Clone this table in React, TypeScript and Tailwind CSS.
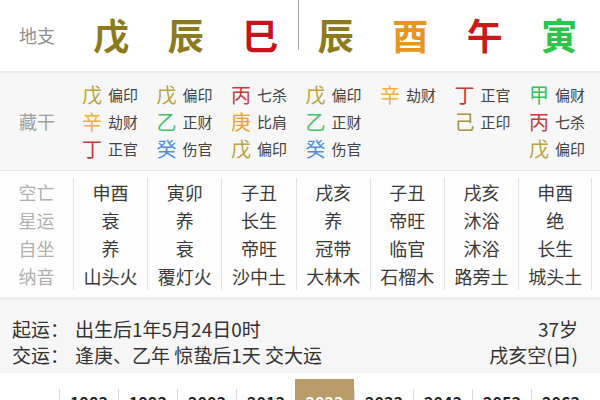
const branches = [
  { ch: '戊', color: 'text-[#8c7a1f]' },
  { ch: '辰', color: 'text-[#8c7a1f]' },
  { ch: '巳', color: 'text-[#c4141c]' },
  { ch: '辰', color: 'text-[#8c7a1f]' },
  { ch: '酉', color: 'text-[#e9951d]' },
  { ch: '午', color: 'text-[#cc1a1a]' },
  { ch: '寅', color: 'text-[#2ec34b]' },
];

const stemColor: Record<string, string> = {
  戊: 'text-[#b9a33c]',
  己: 'text-[#a8953a]',
  辛: 'text-[#f0b23a]',
  庚: 'text-[#e9a131]',
  丁: 'text-[#c53a3a]',
  丙: 'text-[#c43d3d]',
  乙: 'text-[#43c266]',
  甲: 'text-[#35c260]',
  癸: 'text-[#4b8fdc]',
};

type Hidden = [string, string] | null;

const hidden: Hidden[][] = [
  [['戊', '偏印'], ['辛', '劫财'], ['丁', '正官']],
  [['戊', '偏印'], ['乙', '正财'], ['癸', '伤官']],
  [['丙', '七杀'], ['庚', '比肩'], ['戊', '偏印']],
  [['戊', '偏印'], ['乙', '正财'], ['癸', '伤官']],
  [['辛', '劫财'], null, null],
  [['丁', '正官'], ['己', '正印'], null],
  [['甲', '偏财'], ['丙', '七杀'], ['戊', '偏印']],
];

const details = [
  ['申酉', '衰', '养', '山头火'],
  ['寅卯', '养', '衰', '覆灯火'],
  ['子丑', '长生', '帝旺', '沙中土'],
  ['戌亥', '养', '冠带', '大林木'],
  ['子丑', '帝旺', '临官', '石榴木'],
  ['戌亥', '沐浴', '沐浴', '路旁土'],
  ['申酉', '绝', '长生', '城头土'],
];

const detailLabels = ['空亡', '星运', '自坐', '纳音'];

const years = ['1983', '1993', '2003', '2013', '2023', '2033', '2043', '2053', '2063'];

export default function App() {
  return (
    <div
      className="w-[600px] h-[400px] overflow-hidden bg-white"
      style={{ fontFamily: '"Noto Sans CJK SC", "Noto Sans", sans-serif' }}
    >
      {/* 地支 */}
      <div className="flex h-[73px] border-b-2 border-[#ebebeb]">
        <div className="w-[74px] flex items-center justify-center text-[18px] text-[#8f8f8f]">地支</div>
        {branches.map((b, i) => (
          <div key={i} className="flex">
            {i === 3 && <div className="h-[50px] self-start border-l border-[#a8a8a8]" />}
            <div
              className={`w-[74.5px] pb-[3px] flex items-center justify-center text-[36px] font-bold leading-none ${b.color}`}
            >
              {b.ch}
            </div>
          </div>
        ))}
      </div>

      {/* 藏干 */}
      <div className="flex bg-[#f7f7f7] py-[8px] border-b border-[#e6e6e6]">
        <div className="w-[74px] flex items-center justify-center text-[18px] text-[#a0a0a0]">藏干</div>
        {hidden.map((col, i) => (
          <div key={i} className="w-[74.5px] pl-[8px] flex flex-col">
            {col.map((item, j) => (
              <div key={j} className="h-[27px] flex items-center">
                {item && (
                  <>
                    <span className={`w-[20px] text-[20px] leading-none ${stemColor[item[0]]}`}>{item[0]}</span>
                    <span className="ml-[6px] text-[15px] leading-none text-[#444]">{item[1]}</span>
                  </>
                )}
              </div>
            ))}
          </div>
        ))}
      </div>

      {/* 空亡 / 星运 / 自坐 / 纳音 */}
      <div className="flex bg-[#fdfdfd] pt-[7px] pb-[7px]">
        <div className="w-[73px] flex flex-col">
          {detailLabels.map((l) => (
            <div key={l} className="h-[28px] flex items-center justify-center text-[18px] text-[#b0b0b0]">
              {l}
            </div>
          ))}
        </div>
        {details.map((col, i) => (
          <div
            key={i}
            className={`w-[74.2px] flex flex-col border-l border-[#e3e3e3] ${i === 6 ? 'border-r' : ''}`}
          >
            {col.map((v, j) => (
              <div key={j} className="h-[28px] flex items-center justify-center text-[18px] text-[#3a3a3a]">
                {v}
              </div>
            ))}
          </div>
        ))}
      </div>

      {/* 起运 / 交运 */}
      <div className="border-t-[3px] border-[#ececec] bg-[#f6f6f6] h-[76px] pt-[16px] pl-[12px] pr-[22px] text-[19px] text-[#333]">
        <div className="h-[26px] flex items-center justify-between">
          <div>
            起运：<span className="ml-[6px]">出生后1年5月24日0时</span>
          </div>
          <div>37岁</div>
        </div>
        <div className="h-[26px] flex items-center justify-between">
          <div>
            交运：<span className="ml-[6px]">逢庚、乙年 惊蛰后1天 交大运</span>
          </div>
          <div>戌亥空(日)</div>
        </div>
      </div>

      {/* 大运年份 */}
      <div className="flex items-start pl-[59px] pt-[6px] bg-white">
        {years.map((y, i) => (
          <div
            key={y}
            className={`w-[59px] flex justify-center text-[16px] font-bold leading-none ${
              i === 4
                ? 'h-[40px] pt-[15px] bg-[#b89d6b] text-white'
                : 'h-[30px] mt-[10px] pt-[5px] text-[#222] border-l border-[#d8d8d8]'
            }`}
          >
            {y}
          </div>
        ))}
      </div>
    </div>
  );
}
